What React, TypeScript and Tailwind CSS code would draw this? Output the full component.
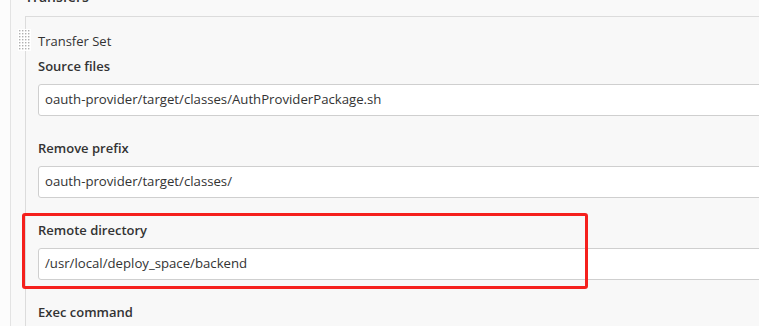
import React from "react";

const fields = [
  { label: "Source files", value: "oauth-provider/target/classes/AuthProviderPackage.sh" },
  { label: "Remove prefix", value: "oauth-provider/target/classes/" },
  { label: "Remote directory", value: "/usr/local/deploy_space/backend" },
];

function DragHandle() {
  const dots = [];
  for (let r = 0; r < 7; r++) {
    for (let c = 0; c < 4; c++) {
      dots.push(<rect key={`${r}-${c}`} x={1 + c * 3} y={1 + r * 3} width={1.4} height={1.4} fill="#b0b0b0" />);
    }
  }
  return (
    <svg width="13" height="22" viewBox="0 0 13 22" className="bg-white">
      {dots}
    </svg>
  );
}

export default function App() {
  return (
    <div
      className="w-[759px] h-[326px] overflow-hidden bg-[#fcfcfc] relative flex text-[#333]"
      style={{ fontFamily: '"Open Sans", "Noto Sans", Arial, sans-serif' }}
    >
      <div className="w-[10px] shrink-0" />
      <div className="flex-1 border-l border-[#e3e3e3] bg-[#f9f9f9] pl-[14px] flex flex-col">
        <div className="h-[16px] relative">
          <div className="absolute left-0 top-[-13px] text-[14px] font-semibold leading-[20px]">Transfers</div>
        </div>
        <div className="relative border-t border-l border-[#dcdcdc] bg-[#f8f8f8] pl-[12px] pt-[14px] w-[800px] flex-1">
          <div className="absolute left-[-8px] top-[12px]">
            <DragHandle />
          </div>
          <div className="text-[13px] leading-[20px] mb-[5px]">Transfer Set</div>
          {fields.map((f) => (
            <div key={f.label} className="mb-[22px]">
              <div className="text-[13px] font-semibold leading-[20px]">{f.label}</div>
              <div className="mt-[8px] h-[32px] bg-white border border-[#cfcfcf] rounded-[3px] pl-[6px] flex items-center text-[13.2px] w-[760px]">
                {f.value}
              </div>
            </div>
          ))}
          <div className="text-[13px] font-semibold leading-[20px]">Exec command</div>
        </div>
      </div>
      <div className="absolute left-[22px] top-[213px] w-[566px] h-[76px] border-[3px] border-[#f5201d] rounded-[3px] pointer-events-none" />
    </div>
  );
}
